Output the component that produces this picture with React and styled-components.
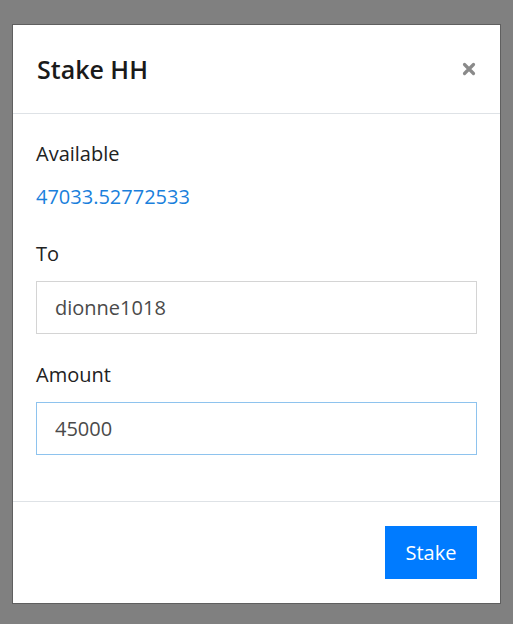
import React from "react";
import styled, { createGlobalStyle } from "styled-components";

const GlobalStyle = createGlobalStyle`
  html, body {
    margin: 0;
    padding: 0;
    background: #808080;
    font-family: "Open Sans", "Noto Sans", sans-serif;
  }
`;

const Backdrop = styled.div`
  width: 513px;
  height: 624px;
  box-sizing: border-box;
  padding: 24px 12px 0 12px;
  background: #808080;
`;

const Modal = styled.div`
  width: 489px;
  height: 580px;
  box-sizing: border-box;
  background: #fff;
  border: 1px solid #5f5f5f;
  display: flex;
  flex-direction: column;
`;

const Header = styled.div`
  height: 89px;
  box-sizing: border-box;
  padding: 0 24px;
  display: flex;
  align-items: center;
  justify-content: space-between;
  border-bottom: 1px solid #dee2e6;
`;

const Title = styled.h2`
  margin: 0;
  font-size: 25px;
  font-weight: 600;
  color: #1a1a1a;
`;

const Close = styled.button`
  border: 0;
  background: none;
  padding: 0;
  width: 14px;
  height: 14px;
  display: flex;
  cursor: pointer;
`;

const Body = styled.div`
  flex: 1;
  padding: 25px 23px 0 23px;
`;

const Label = styled.div`
  font-size: 20px;
  line-height: 30px;
  color: #222;
  margin-bottom: 12px;
`;

const Value = styled.div`
  font-size: 20px;
  line-height: 30px;
  color: #1a7fdc;
  padding-top: 1px;
  margin-bottom: 27px;
`;

const Input = styled.input`
  display: block;
  width: 100%;
  height: 53px;
  box-sizing: border-box;
  padding: 0 18px;
  font-family: inherit;
  font-size: 20px;
  color: #4a4a4a;
  border: 1px solid ${(p) => (p.$focused ? "#8ec3ee" : "#d4d4d4")};
  outline: none;
  margin-bottom: 26px;
`;

const Footer = styled.div`
  height: 102px;
  box-sizing: border-box;
  border-top: 1px solid #dee2e6;
  padding: 24px 23px;
  display: flex;
  justify-content: flex-end;
`;

const Button = styled.button`
  width: 92px;
  height: 53px;
  border: 0;
  background: #007bff;
  color: #fff;
  font-family: inherit;
  font-size: 20px;
  cursor: pointer;
`;

export default function App() {
  return (
    <Backdrop>
      <GlobalStyle />
      <Modal>
        <Header>
          <Title>Stake HH</Title>
          <Close aria-label="Close">
            <svg width="14" height="14" viewBox="0 0 14 14">
              <path d="M2.5 2.5 L11.5 11.5 M11.5 2.5 L2.5 11.5" stroke="#8a8a8a" strokeWidth="3.2" strokeLinecap="round" />
            </svg>
          </Close>
        </Header>
        <Body>
          <Label>Available</Label>
          <Value>47033.52772533</Value>
          <Label>To</Label>
          <Input defaultValue="dionne1018" />
          <Label>Amount</Label>
          <Input $focused defaultValue="45000" />
        </Body>
        <Footer>
          <Button>Stake</Button>
        </Footer>
      </Modal>
    </Backdrop>
  );
}
